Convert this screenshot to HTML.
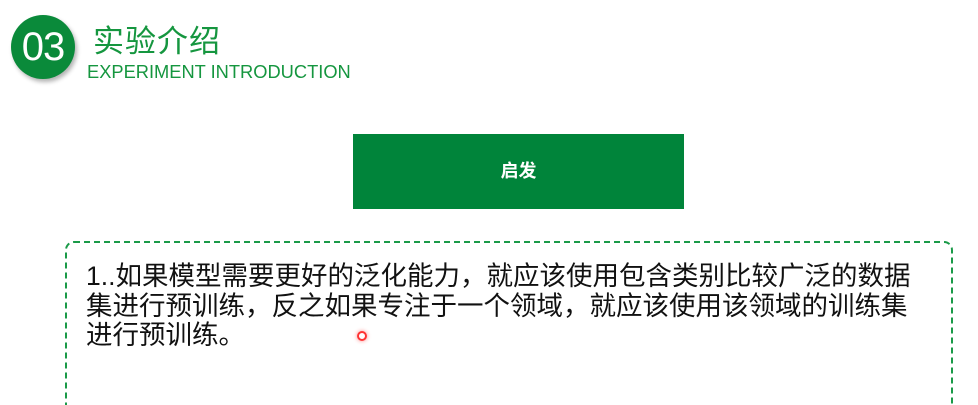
<!DOCTYPE html>
<html style="overflow:hidden;height:405px"><head><meta charset="utf-8"><style>
body{margin:0;width:978px;height:405px;background:#fff;position:relative;overflow:hidden;font-family:"Liberation Sans","Noto Sans CJK SC",sans-serif}
.c{position:absolute;left:11px;top:15px;width:64px;height:64px;border-radius:50%;background:#0a8a3a;box-shadow:2px 3px 4px rgba(0,0,0,.3);color:#fff;font-size:40px;line-height:64px;text-align:center;letter-spacing:-1px}
.t{position:absolute;left:93px;top:24px;font-size:31px;color:#15963f;line-height:36px;letter-spacing:1px}
.e{position:absolute;left:87px;top:62px;font-size:18.3px;color:#15963f;line-height:20px}
.b{position:absolute;left:353px;top:134px;width:331px;height:75px;background:#00843a;color:#fff;font-size:18px;font-weight:bold;line-height:75px;text-align:center}
.box{position:absolute;left:65px;top:241px;width:884px;height:162px;border:2px dashed #1a9a48;border-bottom:none;border-radius:9px 9px 0 0}
.p{position:absolute;left:86px;top:262px;width:850px;font-size:26.5px;line-height:29.5px;color:#111}
.dot{position:absolute;left:357px;top:331px;width:6px;height:6px;border:2px solid #f33;border-radius:50%;box-shadow:0 0 4px #f88}
</style></head><body>
<div class="c">03</div>
<div class="t">实验介绍</div>
<div class="e">EXPERIMENT INTRODUCTION</div>
<div class="b">启发</div>
<div class="box"></div>
<div class="p">1..如果模型需要更好的泛化能力，就应该使用包含类别比较广泛的数据<br>集进行预训练，反之如果专注于一个领域，就应该使用该领域的训练集<br>进行预训练。</div>
<div class="dot"></div>
</body></html>
